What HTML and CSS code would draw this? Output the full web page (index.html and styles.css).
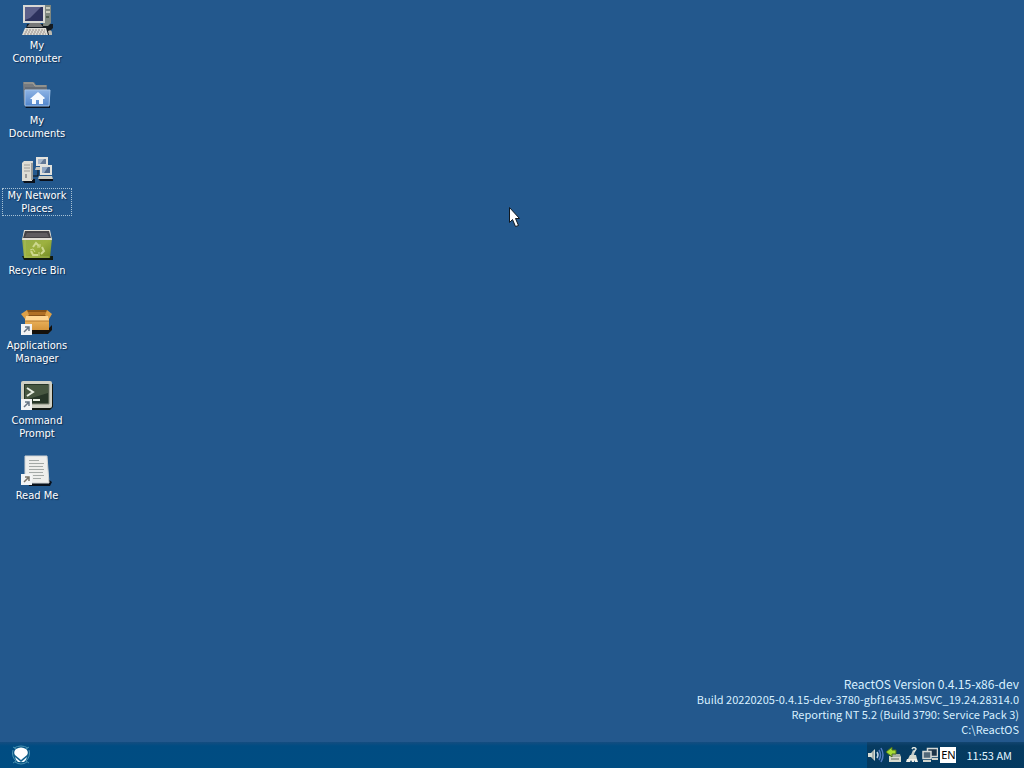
FILE: index.html
```html
<!DOCTYPE html>
<html lang="en">
<head>
<meta charset="utf-8">
<title>ReactOS Desktop</title>
<link rel="stylesheet" href="styles.css">
</head>
<body>
<main class="desktop">
  <nav class="shortcuts" aria-label="Desktop shortcuts">
    <button class="shortcut" type="button">
      <svg class="shortcut-icon" viewBox="0 0 32 32" aria-hidden="true">
        <path d="M6 20h26v4l-3 3v4H4z" fill="#141a20"/>
        <path d="M23 1h7v18l-3 3h-5z" fill="#7f8780"/><path d="M25 3h4v2h-4zM25 7h4v2h-4z" fill="#c8cabc"/><path d="M25 12h3v2h-3z" fill="#4c5a4c"/>
        <path d="M2 1h22v18H2z" fill="#d8d8d4"/><path d="M4 3h18v14H4z" fill="#2c315d"/><path d="M4 3h16L9 14l-5 2z" fill="#5c608a"/>
        <path d="M9 19h10l3 4H6z" fill="#777"/>
        <path d="M4 24h21l2 7H1z" fill="#dfddd6"/><path d="M5 26h19M4 28h21M3 30h22" stroke="#968d88" stroke-dasharray="2 1"/>
        <path d="M27 27q4-2 4 2v2h-3z" fill="#bdb9af"/>
      </svg>
      <span class="shortcut-label">My<br>Computer</span>
    </button>
    <button class="shortcut" type="button">
      <svg class="shortcut-icon" viewBox="0 0 32 32" aria-hidden="true">
        <defs><linearGradient id="folder" x2="0" y2="1"><stop stop-color="#8db3e4"/><stop offset="1" stop-color="#5185cb"/></linearGradient></defs>
        <path d="M3 26h26v3H5z" fill="#081424"/>
        <path d="M2 3h11l2 3h11v20H3z" fill="#777b80"/><path d="M3 4h9l2 3h11" fill="none" stroke="#aaa99c"/>
        <path d="M4 9h22" stroke="#555f6b"/>
        <path d="M4 11h25l-1 16H4z" fill="url(#folder)" stroke="#a0c2ea"/>
        <path d="M17 13l7 6-1 1h-1v5h-4v-4h-3v4h-4v-5H9l1-1z" fill="#f5faff"/>
      </svg>
      <span class="shortcut-label">My<br>Documents</span>
    </button>
    <button class="shortcut selected" type="button">
      <svg class="shortcut-icon" viewBox="0 0 32 32" aria-hidden="true">
        <path d="M1 25h13v4H3zM17 24h15v3H19z" fill="#0a101a"/>
        <path d="M1 9l2-2h9l-1 20H1z" fill="#deddd5"/><path d="M3 11h6M3 14h6M3 17h6" stroke="#9b9b98"/><path d="M4 20h2v4H4z" fill="#999"/><path d="M10 9h2v17h-2z" fill="#9b9d9a"/>
        <path d="M15 3h12v9H15z" fill="#e4e3de"/><path d="M17 5h8v5h-8z" fill="#627895"/><path d="M17 5h6l-4 5h-2z" fill="#a6b7cb"/><path d="M15 13h8v3h-9z" fill="#c5c5bd"/>
        <path d="M19 11h12v10H19z" fill="#e1e1dc"/><path d="M21 13h8v6h-8z" fill="#4a6589"/><path d="M21 13h6l-4 6h-2z" fill="#91a7c2"/><path d="M18 22h13l1 3H17z" fill="#cecdc4"/><path d="M12 22h5v-6" fill="none" stroke="#111"/>
      </svg>
      <span class="shortcut-label">My Network<br>Places</span>
    </button>
    <button class="shortcut" type="button">
      <svg class="shortcut-icon" viewBox="0 0 32 32" aria-hidden="true">
        <defs><linearGradient id="bin" x2="1" y2="1"><stop stop-color="#94ad4c"/><stop offset=".5" stop-color="#9db13f"/><stop offset="1" stop-color="#718923"/></linearGradient></defs>
        <path d="M1 27h31v4H3z" fill="#10180e"/><path d="M1 9h30l-2 20H3z" fill="url(#bin)"/><path d="M4 11v17h24" fill="none" stroke="#b5c665" opacity=".7"/>
        <path d="M3 1h26l2 10H1z" fill="#e1ded7"/><path d="M4 2h24l2 7H2z" fill="#454246"/><path d="M6 4h20l2 4H4z" fill="#605c60"/>
        <g fill="none" stroke="#cdd88e" stroke-width="2"><path d="M12 18l3-4 3 3M21 18l2 4-3 3M17 26h-5l-2-4"/><path d="M16 18h3v-3M18 23v4M9 21l3-1 2 3" stroke-width="1"/></g>
      </svg>
      <span class="shortcut-label">Recycle Bin</span>
    </button>
    <button class="shortcut" type="button">
      <svg class="shortcut-icon" viewBox="0 0 32 32" aria-hidden="true">
        <defs><linearGradient id="box" x2="0" y2="1"><stop stop-color="#f3bd69"/><stop offset="1" stop-color="#d5953b"/></linearGradient></defs>
        <path d="M6 24h22l3-3v5l-4 4H9z" fill="#15110c"/><path d="M4 12h24v14H4z" fill="url(#box)"/>
        <path d="M6 6h20l2 6H4z" fill="#855118"/><path d="M7 8h18v3H7z" fill="#b07026"/><path d="M6 6L0 10l4 5 4-4zM26 6l5 4-3 5-4-4z" fill="#dda047"/><path d="M5 12h22l1 5H4z" fill="#ffd692"/><path d="M4 17h24" stroke="#b57a30"/>
        <g><path d="M0 20h11v11H0z" fill="#f3f4f5"/><path d="M3 28l5-5M4 23h4v4" fill="none" stroke="#677585" stroke-width="1.5"/></g>
      </svg>
      <span class="shortcut-label">Applications<br>Manager</span>
    </button>
    <button class="shortcut" type="button">
      <svg class="shortcut-icon" viewBox="0 0 32 32" aria-hidden="true">
        <path d="M4 5h28v23l-3 3H4z" fill="#111713"/><rect x="0" y="2" width="31" height="27" rx="2" fill="#cfd0c4"/>
        <path d="M3 5h25v20H3z" fill="#263527"/><path d="M4 6h23v8L4 21z" fill="#465640"/><path d="M28 5v20H4" fill="none" stroke="#858c7c"/>
        <path d="M6 9l6 4-6 4" fill="none" stroke="#e8eee2" stroke-width="2"/><path d="M12 21h7" stroke="#e8eee2" stroke-width="2"/>
        <g><path d="M0 20h11v11H0z" fill="#f3f4f5"/><path d="M3 28l5-5M4 23h4v4" fill="none" stroke="#677585" stroke-width="1.5"/></g>
      </svg>
      <span class="shortcut-label">Command<br>Prompt</span>
    </button>
    <button class="shortcut" type="button">
      <svg class="shortcut-icon" viewBox="0 0 32 32" aria-hidden="true">
        <path d="M7 28h20v-3l4 3-2 4H8z" fill="#09111c"/><path d="M4 2h22l2 27H4z" fill="#eeeeec" stroke="#d0d3d4"/>
        <path d="M8 6.500h10M8 9.500h15M8 12.500h14M8 15.500h15M8 18.500h14M12 21.500h11M12 24.500h8" stroke="#a4a9a7"/>
        <g><path d="M0 20h11v11H0z" fill="#f3f4f5"/><path d="M3 28l5-5M4 23h4v4" fill="none" stroke="#7b7468" stroke-width="1.5"/></g>
      </svg>
      <span class="shortcut-label">Read Me</span>
    </button>
  </nav>
  <div class="version">
    <p class="version-title">ReactOS Version 0.4.15-x86-dev</p>
    <p>Build 20220205-0.4.15-dev-3780-gbf16435.MSVC_19.24.28314.0</p>
    <p>Reporting NT 5.2 (Build 3790: Service Pack 3)</p>
    <p>C:\ReactOS</p>
  </div>
  <svg class="pointer" viewBox="0 0 12 21" aria-hidden="true"><path d="M.5 1.500v15l3-3 3 7 3-1-3-7h4z" fill="#fff" stroke="#101820"/></svg>
</main>
<footer class="taskbar">
  <button class="start" type="button" aria-label="Start">
    <svg viewBox="0 0 20 20" aria-hidden="true"><circle cx="10" cy="10" r="8" fill="#12608b"/><path d="M3 3q7-4 14 0M2 5q-2 6 3 11M18 5q2 6-3 11M4 17q6 4 12 0M2 2l3 2M18 2l-3 2M2 18l3-2M18 18l-3-2" fill="none" stroke="#4a92b0"/><path d="M5 4q5-3 10 0 3 3 1 6l-6 5-6-5Q2 7 5 4z" fill="#fff"/><path d="M4 12l6 5H7q-2-1-3-5zM16 12l-6 5h3q2-1 3-5z" fill="#eef9ff"/></svg>
  </button>
  <div class="tray">
    <button class="tray-button" type="button" aria-label="Volume"><svg viewBox="0 0 16 16"><path d="M0 6h3l4-4v12l-4-4H0z" fill="#d6ddd6"/><path d="M5 4v8" stroke="#737f83"/><path d="M9 5q2 3 0 6" fill="none" stroke="#bfd2e9" stroke-width="1.500"/><path d="M11 3q3 5 0 10M13 1q4 7 0 14" fill="none" stroke="#527bc0" stroke-width="1.500"/></svg></button>
    <button class="tray-button" type="button" aria-label="Safely remove hardware"><svg viewBox="0 0 16 16"><path d="M3 9h12v6H3z" fill="#d8dacd"/><path d="M6 7h8l1 3H4z" fill="#a7b0a4"/><path d="M5 12h8" stroke="#5b665d"/><path d="M0 5l6-5v3h4v4H6v3z" fill="#a5db33" stroke="#486d20"/></svg></button>
    <button class="tray-button" type="button" aria-label="Cleanup"><svg viewBox="0 0 16 16"><path d="M7 8l2-5 2 1-1 4z" fill="#bfc8c5"/><path d="M8 2q2-3 4 0l-2 3" fill="none" stroke="#dfe5df" stroke-width="1.500"/><path d="M6 8h6l1 4H4z" fill="#d4d9cf"/><path d="M3 12h10l1 3h-3l-1-2v2H8l-1-2-1 2H2z" fill="#f1f1e9"/></svg></button>
    <button class="tray-button" type="button" aria-label="Network"><svg viewBox="0 0 16 16"><path d="M5.500 1.500h10v8h-10z" fill="#1d3448" stroke="#d5d9d6" stroke-width="1.500"/><path d="M1 4.500h8v7H1z" fill="#526879" stroke="#d5d9d6" stroke-width="1.500"/><path d="M1 14h8M10 12h6" stroke="#d0d4cc" stroke-width="2"/></svg></button>
    <button class="language" type="button">EN</button>
    <time class="clock" datetime="11:53">11:53 AM</time>
  </div>
</footer>
</body>
</html>
```
FILE: styles.css
```css
* { box-sizing: border-box; }
body {
  margin: 0;
  min-height: 100vh;
  display: flex;
  flex-direction: column;
  background: #23588d;
  color: #fff;
  font: 11px/15px "Noto Sans CJK SC", "Noto Sans", sans-serif;
}
button { padding: 0; border: 0; background: none; color: inherit; font: inherit; }
p { margin: 0; }
.desktop { flex: 1; display: flex; justify-content: space-between; position: relative; }
.shortcuts { display: grid; grid-auto-rows: 75px; align-content: start; padding-left: 2px; }
.shortcut {
  width: 70px;
  display: flex;
  flex-direction: column;
  align-items: center;
  gap: 2px;
  padding-top: 4px;
  font: 11px/13px "DejaVu Sans Condensed", "DejaVu Sans", sans-serif;
  text-shadow: 1px 1px 1px #102d50;
}
.shortcut-icon { width: 32px; height: 32px; }
.shortcut-label { width: 100%; border: 1px solid transparent; white-space: nowrap; }
.selected .shortcut-label { border: 1px dotted #a9c2d4; }
.version {
  align-self: flex-end;
  padding: 0 5px 5px 0;
  text-align: right;
  color: #d9f0ff;
}
.version-title { font-size: 12px; line-height: 17px; }
.pointer { position: absolute; left: 509px; top: 206px; width: 12px; height: 21px; }
.taskbar {
  display: flex;
  justify-content: space-between;
  height: 26px;
  background: linear-gradient(#144d80, #004c82 4px, #004d82);
}
.start { margin-left: 11px; display: flex; align-items: center; }
.start svg { width: 20px; height: 20px; }
.tray {
  display: flex;
  align-items: center;
  gap: 2px;
  padding: 0 12px 0 1px;
  background: linear-gradient(#124570, #063b61 4px, #043a60);
}
.tray-button { display: flex; }
.tray-button svg { width: 16px; height: 16px; }
.language { width: 16px; height: 16px; background: #fff; color: #000; font: 11px/16px "Noto Sans", sans-serif; }
.clock { margin-left: 8px; color: #e2f5ff; }
```
